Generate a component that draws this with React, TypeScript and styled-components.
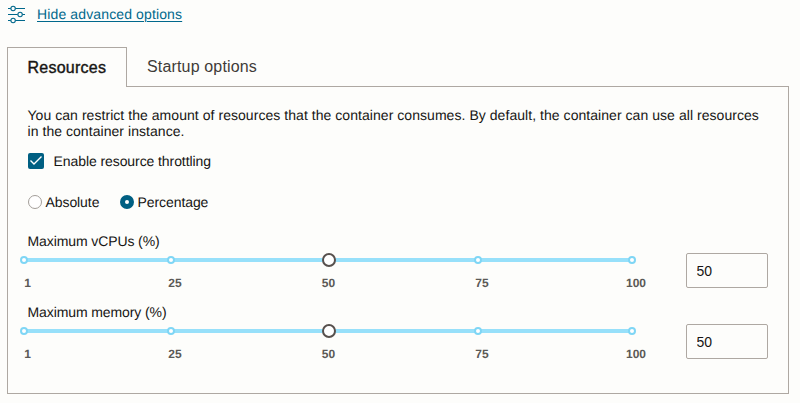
import React, { useState } from "react";
import styled, { createGlobalStyle } from "styled-components";

const GlobalStyle = createGlobalStyle`
  *, *::before, *::after { box-sizing: border-box; }
  body {
    margin: 0;
    background: #fdfdfb;
    color: #161513;
    font: 14px/16px "Liberation Sans", Arial, sans-serif;
    text-rendering: geometricPrecision;
  }
`;

const Page = styled.main`
  width: 800px;
  height: 403px;
  padding: 5px 11px 0 7px;
  overflow: hidden;
`;

const Toolbar = styled.header`
  display: flex;
  align-items: center;
  gap: 11px;
  height: 19px;
  margin-bottom: 23px;
`;

const OptionsLink = styled.a`
  margin-top: -2px;
  color: #00688c;
  letter-spacing: 0.13px;
  text-decoration: underline;
  text-underline-offset: 2px;
  text-decoration-thickness: 1px;
`;

const TabList = styled.div`
  display: flex;
  height: 40px;
  margin-bottom: -1px;
`;

const Tab = styled.button<{ $active?: boolean }>`
  position: relative;
  width: ${(p) => (p.$active ? "120px" : "150px")};
  padding: ${(p) => (p.$active ? "0 0 0 19.5px" : "0 0 2px 19px")};
  border: 1px solid ${(p) => (p.$active ? "#aea8a2" : "transparent")};
  border-bottom: 0;
  background: ${(p) => (p.$active ? "#fdfdfb" : "transparent")};
  color: ${(p) => (p.$active ? "#161513" : "#3f3b38")};
  font: 16px/20px "Liberation Sans", Arial, sans-serif;
  letter-spacing: ${(p) => (p.$active ? "0.24px" : "0.16px")};
  -webkit-text-stroke: ${(p) => (p.$active ? "0.4px #161513" : "0")};
  text-align: left;
  white-space: nowrap;
`;

const Panel = styled.section`
  width: 782px;
  height: 308px;
  padding: 20px 20px 0 20px;
  border: 1px solid #aea8a2;
`;

const Description = styled.p`
  width: 740px;
  margin: 0 0 14px -0.5px;
  letter-spacing: 0.05px;
`;

const CheckRow = styled.label`
  display: flex;
  align-items: center;
  gap: 9.5px;
  height: 16px;
  margin-bottom: 26px;
  letter-spacing: -0.08px;
`;

const CheckBox = styled.span`
  display: flex;
  width: 16px;
  height: 16px;
  border-radius: 2px;
  background: #005f82;
`;

const RadioRow = styled.div`
  display: flex;
  height: 14px;
  margin-bottom: 24px;
  letter-spacing: -0.08px;
`;

const RadioOption = styled.label`
  display: flex;
  align-items: center;
  gap: 3.5px;
  min-width: 92px;
`;

const RadioDot = styled.span<{ $checked: boolean }>`
  width: 14px;
  height: 14px;
  border: ${(p) => (p.$checked ? "5px solid #005f82" : "1px solid #a39e99")};
  border-radius: 50%;
  background: #fff;
`;

const SliderRow = styled.div`
  display: grid;
  grid-template-columns: 658px 82px;
  height: 71px;
`;

const SliderColumn = styled.div`
  display: flex;
  flex-direction: column;
`;

const SliderLabel = styled.span`
  height: 25px;
  margin-left: -0.5px;
  letter-spacing: -0.1px;
`;

const Track = styled.div`
  position: relative;
  width: 608px;
  height: 4px;
  margin-left: -4px;
  background: #97e0fa;
`;

const Tick = styled.i`
  position: absolute;
  top: -2px;
  width: 8px;
  height: 8px;
  margin-left: -4px;
  border: 2px solid #7fd6f5;
  border-radius: 50%;
  background: #fff;
`;

const Thumb = styled.i`
  position: absolute;
  top: -5px;
  width: 14px;
  height: 14px;
  margin-left: -7px;
  border: 2px solid #57504d;
  border-radius: 50%;
  background: #fff;
`;

const Scale = styled.div`
  display: grid;
  grid-template-columns: 147.5px 153.5px 153.5px 154px 0;
  margin: 13px 0 0 -0.5px;
  color: #5b5956;
  font-size: 12px;
  font-weight: bold;
`;

const ScaleMark = styled.span`
  width: 40px;
  margin-left: -20px;
  text-align: center;
`;

const NumberField = styled.input`
  width: 82px;
  height: 35px;
  margin-top: 20px;
  padding: 0 9.5px;
  border: 1px solid #aea8a2;
  border-radius: 2px;
  outline: 0;
  background: #fdfdfb;
  color: #161513;
  font: 14px/16px "Liberation Sans", Arial, sans-serif;
`;

const MIN = 1;
const MAX = 100;
const THUMB_SIZE = 14;
const TRACK_WIDTH = 608;
const ratio = (value: number) => (value - MIN) / (MAX - MIN);

function SlidersIcon() {
  return (
    <svg width="19" height="19" viewBox="0 0 19 19" fill="none" stroke="#00688c" strokeWidth="1.1">
      <path d="M1 3.5h2.8M8.4 3.5H18M1 9.5h9.7M15.4 9.5H18M1 15.5h2.8M8.4 15.5H18" />
      <circle cx="6.1" cy="3.5" r="2.2" />
      <circle cx="13.1" cy="9.5" r="2.2" />
      <circle cx="6.1" cy="15.5" r="2.2" />
    </svg>
  );
}

function Slider({ label }: { label: string }) {
  const [value, setValue] = useState("50");
  const amount = Math.min(MAX, Math.max(MIN, Number(value) || MIN));
  const thumbLeft = ratio(amount) * (TRACK_WIDTH - THUMB_SIZE / 2) + THUMB_SIZE / 2;
  return (
    <SliderRow>
      <SliderColumn>
        <SliderLabel>{label}</SliderLabel>
        <Track>
          {[1, 25, 75, 100].map((n) => (
            <Tick key={n} style={{ left: Math.round(ratio(n) * TRACK_WIDTH) }} />
          ))}
          <Thumb style={{ left: Math.ceil(thumbLeft) }} />
        </Track>
        <Scale>
          {[1, 25, 50, 75, 100].map((n) => (
            <ScaleMark key={n}>{n}</ScaleMark>
          ))}
        </Scale>
      </SliderColumn>
      <NumberField aria-label={label} value={value} onChange={(e) => setValue(e.target.value)} />
    </SliderRow>
  );
}

export default function App() {
  const [mode, setMode] = useState("Percentage");
  return (
    <Page>
      <GlobalStyle />
      <Toolbar>
        <SlidersIcon />
        <OptionsLink href="#">Hide advanced options</OptionsLink>
      </Toolbar>
      <TabList>
        <Tab $active>Resources</Tab>
        <Tab>Startup options</Tab>
      </TabList>
      <Panel>
        <Description>
          You can restrict the amount of resources that the container consumes. By default, the container can use all resources in the
          container instance.
        </Description>
        <CheckRow>
          <CheckBox>
            <svg width="16" height="16" viewBox="0 0 16 16" fill="none" stroke="#fff" strokeWidth="1.4">
              <path d="M2.5 7.6 6 11.1 13.5 3.6" />
            </svg>
          </CheckBox>
          Enable resource throttling
        </CheckRow>
        <RadioRow>
          {["Absolute", "Percentage"].map((name) => (
            <RadioOption key={name} onClick={() => setMode(name)}>
              <RadioDot $checked={mode === name} />
              {name}
            </RadioOption>
          ))}
        </RadioRow>
        <Slider label="Maximum vCPUs (%)" />
        <Slider label="Maximum memory (%)" />
      </Panel>
    </Page>
  );
}
